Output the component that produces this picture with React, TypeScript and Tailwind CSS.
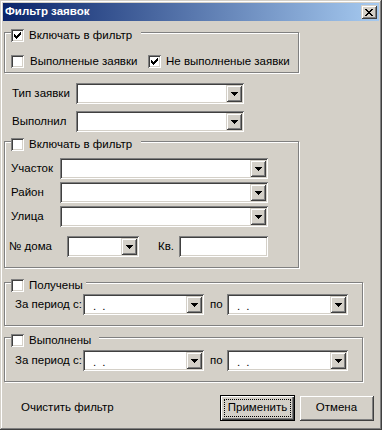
import type { ReactNode } from 'react';

const sunken =
  'shadow-[inset_1px_1px_0_#808080,inset_-1px_-1px_0_#ffffff,inset_2px_2px_0_#404040,inset_-2px_-2px_0_#d4d0c8]';
const raised =
  'shadow-[inset_1px_1px_0_#d4d0c8,inset_-1px_-1px_0_#404040,inset_2px_2px_0_#ffffff,inset_-2px_-2px_0_#808080]';
const etched =
  'border border-[#808080] shadow-[inset_1px_1px_0_#ffffff,1px_1px_0_#ffffff]';

function Check({ on }: { on?: boolean }) {
  return (
    <span className={`relative block h-[13px] w-[13px] shrink-0 bg-white ${sunken}`}>
      {on && (
        <svg className="absolute left-[3px] top-[3px]" width="7" height="7" viewBox="0 0 7 7" shapeRendering="crispEdges">
          <path
            d="M6 0h1v3h-1zM5 1h1v3h-1zM4 2h1v3h-1zM0 2h1v3h-1zM1 3h1v3h-1zM2 4h1v3h-1zM3 3h1v3h-1z"
            fill="#000"
          />
        </svg>
      )}
    </span>
  );
}

function Arrow() {
  return (
    <svg width="7" height="4" viewBox="0 0 7 4" shapeRendering="crispEdges">
      <path d="M0 0h7v1h-7zM1 1h5v1h-5zM2 2h3v1h-3zM3 3h1v1h-1z" fill="#000" />
    </svg>
  );
}

function Combo({ w, text }: { w: string; text?: ReactNode }) {
  return (
    <div className={`flex h-[21px] shrink-0 items-center bg-white p-[2px] ${sunken} ${w}`}>
      <div className="flex h-full flex-1 items-center pl-[6px] leading-none">{text}</div>
      <div className={`flex h-[17px] w-[16px] items-center justify-center bg-[#d4d0c8] ${raised}`}>
        <Arrow />
      </div>
    </div>
  );
}

function Dots() {
  return (
    <span className="flex gap-[6px] pl-[2px] pt-[4px]">
      <span>.</span>
      <span>.</span>
    </span>
  );
}

function Group({
  title,
  checked,
  legendW,
  className,
  children,
}: {
  title: string;
  checked?: boolean;
  legendW: string;
  className: string;
  children: ReactNode;
}) {
  return (
    <div className={`relative box-border ${etched} ${className}`}>
      <div className={`absolute left-[6px] top-[-4px] flex h-[13px] items-center gap-[5px] bg-[#d4d0c8] ${legendW}`}>
        <Check on={checked} />
        <span>{title}</span>
      </div>
      {children}
    </div>
  );
}

function Period() {
  return (
    <>
      <span className="w-[68px] whitespace-nowrap">За период с:</span>
      <Combo w="w-[121px]" text={<Dots />} />
      <span className="ml-[6px] w-[17px]">по</span>
      <Combo w="w-[121px]" text={<Dots />} />
    </>
  );
}

export default function App() {
  return (
    <div className="box-border flex h-[430px] w-[382px] flex-col bg-[#d4d0c8] p-[3px] font-['Liberation_Sans',Arial,sans-serif] text-[11.5px] text-black shadow-[inset_-1px_-1px_0_#404040,inset_1px_1px_0_#d4d0c8,inset_-2px_-2px_0_#808080,inset_2px_2px_0_#ffffff]">
      <div className="flex h-[18px] shrink-0 items-center bg-[linear-gradient(90deg,#0a246a,#a6caf0)] pl-[2px] pr-[2px]">
        <span className="text-[11.5px] font-bold text-white">Фильтр заявок</span>
        <div className={`ml-auto flex h-[14px] w-[16px] items-center justify-center bg-[#d4d0c8] ${raised}`}>
          <svg width="8" height="7" viewBox="0 0 8 7" shapeRendering="crispEdges">
            <path
              d="M0 0h2v1h-2zM6 0h2v1h-2zM1 1h2v1h-2zM5 1h2v1h-2zM2 2h4v1h-4zM3 3h2v1h-2zM2 4h4v1h-4zM1 5h2v1h-2zM5 5h2v1h-2zM0 6h2v1h-2zM6 6h2v1h-2z"
              fill="#000"
            />
          </svg>
        </div>
      </div>

      <div className="flex flex-1 flex-col pl-[1px]">
        <Group title="Включать в фильтр" checked legendW="w-[130px]" className="mt-[11px] h-[41px] w-[295px]">
          <div className="flex items-center pl-[6px] pt-[20px]">
            <Check />
            <span className="ml-[6px] w-[118px] whitespace-nowrap">Выполненые заявки</span>
            <Check on />
            <span className="ml-[5px] whitespace-nowrap">Не выполненые заявки</span>
          </div>
        </Group>

        <div className="ml-[8px] mt-[10px] flex items-center">
          <span className="w-[64px]">Тип заявки</span>
          <Combo w="w-[168px]" />
        </div>
        <div className="ml-[8px] mt-[7px] flex items-center">
          <span className="w-[64px]">Выполнил</span>
          <Combo w="w-[168px]" />
        </div>

        <Group title="Включать в фильтр" legendW="w-[130px]" className="mt-[9px] h-[127px] w-[295px]">
          <div className="flex flex-col gap-[3px] pl-[6px] pt-[16px]">
            {['Участок', 'Район', 'Улица'].map((l) => (
              <div key={l} className="flex items-center">
                <span className="w-[49px]">{l}</span>
                <Combo w="w-[208px]" />
              </div>
            ))}
            <div className="ml-[-2px] mt-[6px] flex items-center">
              <span className="w-[58px]">№ дома</span>
              <Combo w="w-[72px]" />
              <span className="ml-[19px] w-[21px]">Кв.</span>
              <div className={`h-[21px] w-[89px] bg-white ${sunken}`} />
            </div>
          </div>
        </Group>

        <Group title="Получены" legendW="w-[75px]" className="mt-[14px] h-[44px] w-[359px]">
          <div className="flex items-center pl-[10px] pt-[11px]">
            <Period />
          </div>
        </Group>

        <Group title="Выполнены" legendW="w-[88px]" className="mt-[11px] h-[45px] w-[359px]">
          <div className="flex items-center pl-[10px] pt-[12px]">
            <Period />
          </div>
        </Group>

        <div className="mt-[13px] flex items-center">
          <span className="ml-[17px]">Очистить фильтр</span>
          <div className="ml-auto mr-[5px] flex gap-[4px]">
            <button
              type="button"
              className="box-border flex h-[26px] w-[75px] items-center justify-center border border-black bg-[#d4d0c8] p-[3px] shadow-[inset_1px_1px_0_#ffffff,inset_-1px_-1px_0_#404040,inset_-2px_-2px_0_#808080]"
            >
              <span className="flex h-full w-full items-center justify-center border border-dotted border-black">
                Применить
              </span>
            </button>
            <button
              type="button"
              className={`flex h-[26px] w-[75px] items-center justify-center bg-[#d4d0c8] ${raised}`}
            >
              Отмена
            </button>
          </div>
        </div>
      </div>
    </div>
  );
}
